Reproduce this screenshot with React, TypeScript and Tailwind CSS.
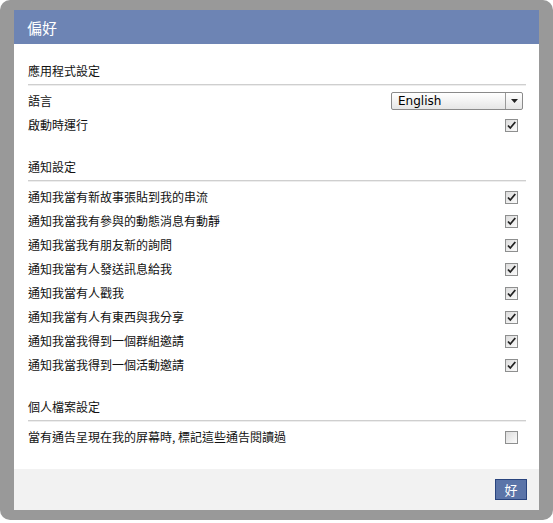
import React from 'react';

const cjk = { fontFamily: '"Noto Sans CJK TC", "Noto Sans CJK SC", sans-serif' };

const notices = [
  '通知我當有新故事張貼到我的串流',
  '通知我當我有參與的動態消息有動靜',
  '通知我當我有朋友新的詢問',
  '通知我當有人發送訊息給我',
  '通知我當有人戳我',
  '通知我當有人有東西與我分享',
  '通知我當我得到一個群組邀請',
  '通知我當我得到一個活動邀請',
];

// little windows-style checkbox
const Check = ({ checked }: { checked: boolean }) => (
  <span className="block w-[13px] h-[13px] border border-[#8e8f8f] bg-gradient-to-br from-[#dcdcdc] to-[#fbfbfb]">
    {checked && (
      <svg width="11" height="11" viewBox="0 0 11 11" className="block">
        <path d="M2 5.5 L4.3 8 L9.3 2" fill="none" stroke="#222" strokeWidth="1.8" />
      </svg>
    )}
  </span>
);

const Row = ({ label, children }: { label: string; children: React.ReactNode }) => (
  <div className="flex items-center justify-between h-[24px] pr-[8px]">
    <span className="text-[12px] text-[#111] leading-[24px]">{label}</span>
    {children}
  </div>
);

const Section = ({ title, children }: { title: string; children: React.ReactNode }) => (
  <div className="mb-[20px]">
    <div className="h-[24px] leading-[20px] text-[12px] text-[#111] border-b border-[#cfcfcf] shadow-[0_1px_0_#ededed]">
      {title}
    </div>
    <div className="pt-[4px]">{children}</div>
  </div>
);

export default function App() {
  return (
    <div className="w-[553px] h-[520px] bg-[#999999] rounded-[10px] pt-[10px] px-[14px]" style={cjk}>
      <div className="h-[500px] bg-white flex flex-col">
        <div className="h-[34px] bg-[#6d84b4] text-white text-[15px] leading-[36px] pl-[13px]">偏好</div>

        <div className="flex-1 pt-[17px] pl-[14px] pr-[13px]">
          <Section title="應用程式設定">
            <Row label="語言">
              <div className="flex items-center w-[132px] h-[18px] -mr-[5px] border border-[#8a8a8a] rounded-[2px] bg-gradient-to-b from-white to-[#e6e6e6]">
                <span
                  className="flex-1 pl-[6px] text-[12px] leading-[16px] text-black"
                  style={{ fontFamily: '"DejaVu Sans", "Liberation Sans", sans-serif' }}
                >
                  English
                </span>
                <span className="w-[17px] h-full border-l border-[#9a9a9a] flex items-center justify-center">
                  <svg width="7" height="4" viewBox="0 0 7 4">
                    <path d="M0 0 H7 L3.5 4 Z" fill="#222" />
                  </svg>
                </span>
              </div>
            </Row>
            <Row label="啟動時運行">
              <Check checked />
            </Row>
          </Section>

          <Section title="通知設定">
            {notices.map((n) => (
              <Row key={n} label={n}>
                <Check checked />
              </Row>
            ))}
          </Section>

          <Section title="個人檔案設定">
            <Row label="當有通告呈現在我的屏幕時, 標記這些通告閱讀過">
              <Check checked={false} />
            </Row>
          </Section>
        </div>

        <div className="h-[43px] bg-[#f2f2f2] flex items-center justify-end pr-[12px]">
          <button className="w-[32px] h-[21px] bg-[#5b74a8] border border-[#29447e] text-white text-[13px] leading-[19px]">
            好
          </button>
        </div>
      </div>
    </div>
  );
}
